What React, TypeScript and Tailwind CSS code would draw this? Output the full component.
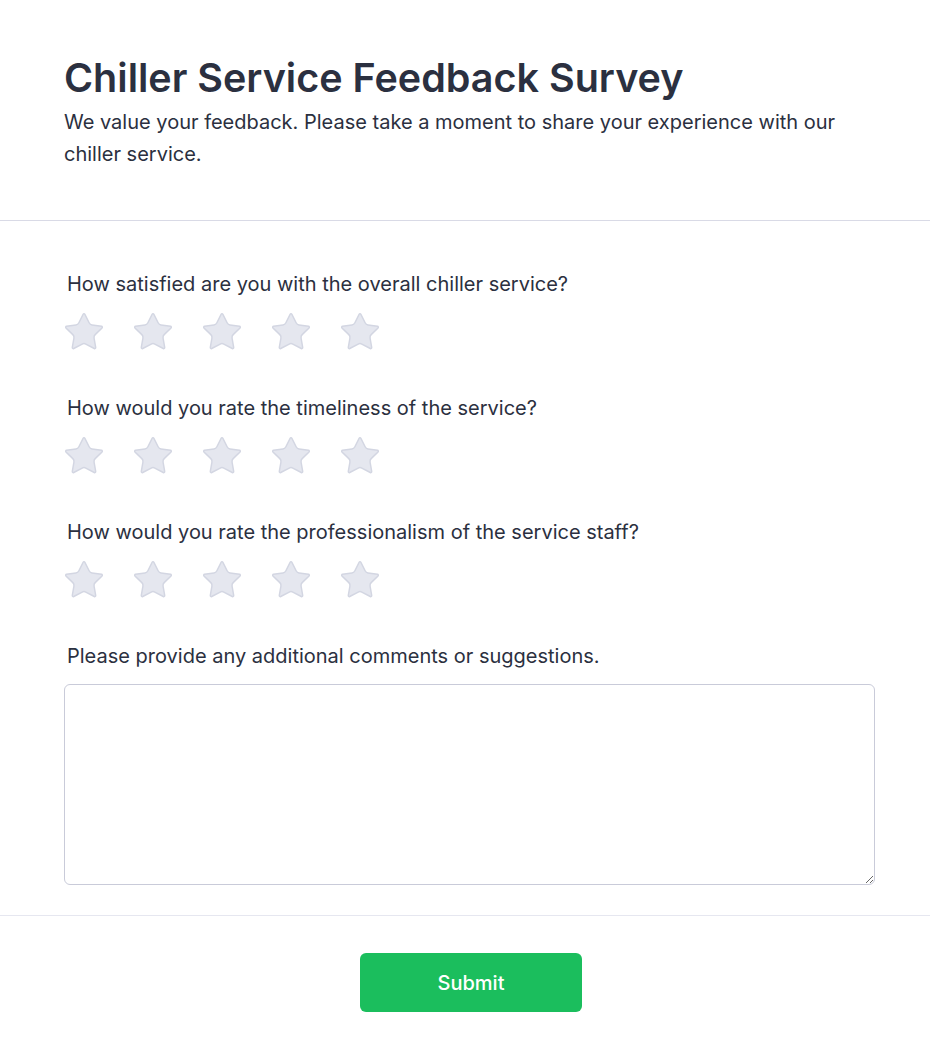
import { Star } from "lucide-react";

const PREGUNTAS = [
  "How satisfied are you with the overall chiller service?",
  "How would you rate the timeliness of the service?",
  "How would you rate the professionalism of the service staff?",
];

function Estrellas() {
  return (
    <div className="flex gap-[25px] -ml-[2px] mt-[12px]">
      {[1, 2, 3, 4, 5].map((n) => (
        <Star
          key={n}
          size={44}
          strokeWidth={0.8}
          className="fill-[#e5e7ef] text-[#d3d6e2]"
        />
      ))}
    </div>
  );
}

export default function App() {
  return (
    <div className="w-[930px] min-h-[1062px] bg-white font-['Inter',sans-serif] text-[#2b3040]">
      {/* Encabezado */}
      <header className="px-16 pt-[50px] pb-[50px] border-b border-[#d9dae6]">
        <h1 className="text-[39.5px] leading-[56px] font-semibold text-[#2b3040]">
          Chiller Service Feedback Survey
        </h1>
        <p className="text-xl leading-8 text-[#2b3040] max-w-[790px]">
          We value your feedback. Please take a moment to share your experience with our chiller service.
        </p>
      </header>

      {/* Preguntas */}
      <main className="px-16 pt-[49px] pb-[30px]">
        {PREGUNTAS.map((p) => (
          <div key={p} className="mb-[40px]">
            <p className="pl-[3px] text-xl leading-7 text-[#2b3040]">{p}</p>
            <Estrellas />
          </div>
        ))}
        <p className="pl-[3px] text-xl leading-7">
          Please provide any additional comments or suggestions.
        </p>
        <textarea className="mt-[14px] block w-[811px] h-[201px] rounded-md border border-[#c9cbd9] bg-white p-3 outline-none" />
      </main>

      {/* Enviar */}
      <footer className="border-t border-[#e6e7f0] flex justify-center pl-3 pt-[37px] pb-[49px]">
        <button className="w-[222px] h-[59px] rounded-md bg-[#1bbe5d] text-white text-xl font-medium">
          Submit
        </button>
      </footer>
    </div>
  );
}
